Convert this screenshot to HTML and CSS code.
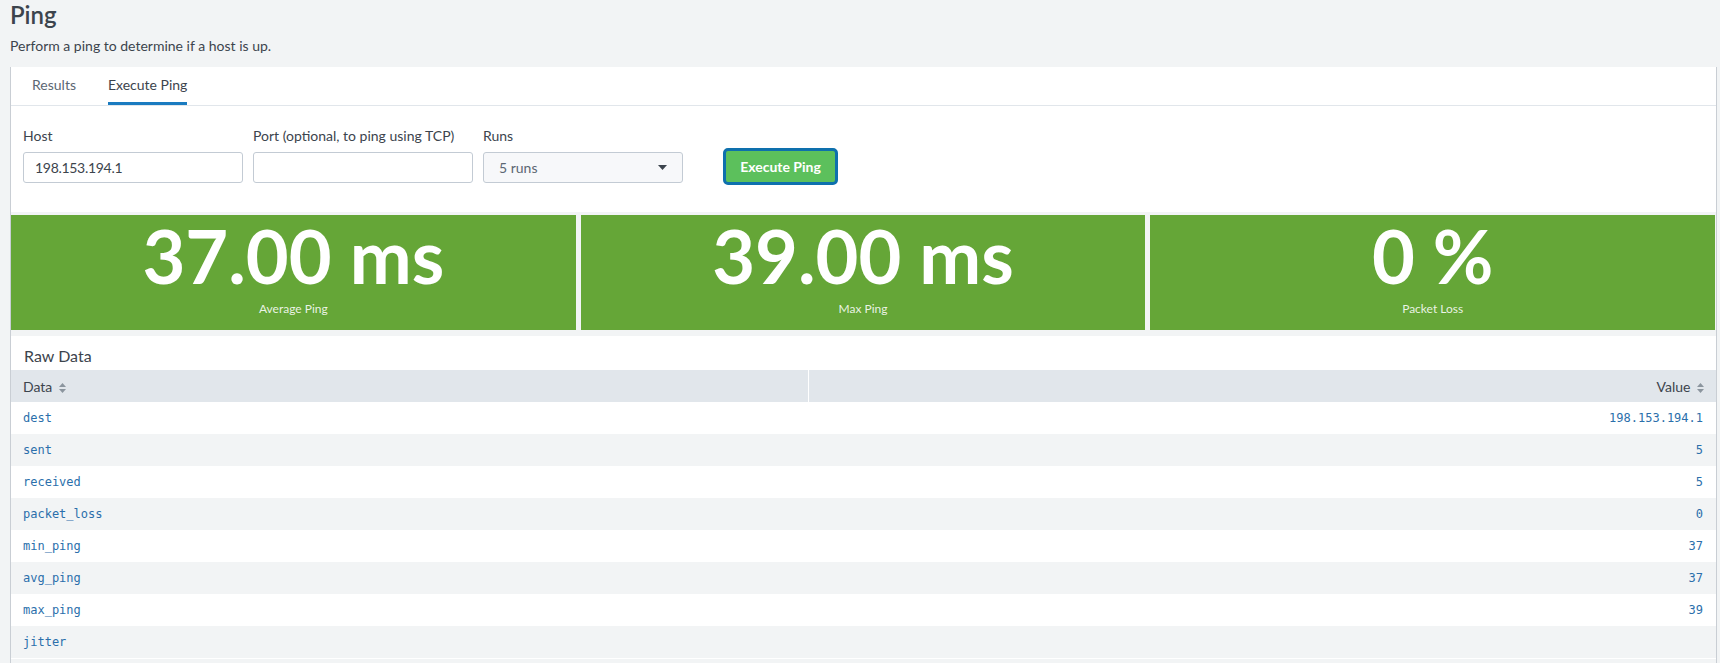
FILE: index.html
```html
<!DOCTYPE html>
<html lang="en">
<head>
<meta charset="utf-8">
<title>Ping</title>
<link rel="stylesheet" href="styles.css">
</head>
<body>
<header class="page-header">
  <h1 class="page-title">Ping</h1>
  <p class="page-desc">Perform a ping to determine if a host is up.</p>
</header>
<main class="panel">
  <nav class="tabs">
    <a class="tab">Results</a>
    <a class="tab tab-active">Execute Ping</a>
  </nav>
  <section class="form">
    <div class="field">
      <label class="field-label">Host</label>
      <div class="input input-text">198.153.194.1</div>
    </div>
    <div class="field">
      <label class="field-label">Port (optional, to ping using TCP)</label>
      <div class="input"></div>
    </div>
    <div class="field field-select">
      <label class="field-label">Runs</label>
      <div class="select">
        <span>5 runs</span>
        <svg class="caret" width="9" height="5" viewBox="0 0 9 5"><path d="M0 0h9L4.5 5z" fill="#3c444d"/></svg>
      </div>
    </div>
    <button class="btn-primary">Execute Ping</button>
  </section>
  <section class="stats">
    <div class="stat">
      <div class="stat-value">37.00 ms</div>
      <div class="stat-label">Average Ping</div>
    </div>
    <div class="stat">
      <div class="stat-value">39.00 ms</div>
      <div class="stat-label">Max Ping</div>
    </div>
    <div class="stat">
      <div class="stat-value">0 %</div>
      <div class="stat-label">Packet Loss</div>
    </div>
  </section>
  <section class="raw">
    <h2 class="raw-title">Raw Data</h2>
    <table class="table">
      <thead>
        <tr>
          <th class="col-data">Data <svg class="sort" width="7" height="10" viewBox="0 0 7 10"><path d="M3.5 0L7 4H0z M3.5 10L0 6h7z" fill="#8b959e"/></svg></th>
          <th class="col-value">Value <svg class="sort" width="7" height="10" viewBox="0 0 7 10"><path d="M3.5 0L7 4H0z M3.5 10L0 6h7z" fill="#8b959e"/></svg></th>
        </tr>
      </thead>
      <tbody>
        <tr><td class="col-data">dest</td><td class="col-value">198.153.194.1</td></tr>
        <tr><td class="col-data">sent</td><td class="col-value">5</td></tr>
        <tr><td class="col-data">received</td><td class="col-value">5</td></tr>
        <tr><td class="col-data">packet_loss</td><td class="col-value">0</td></tr>
        <tr><td class="col-data">min_ping</td><td class="col-value">37</td></tr>
        <tr><td class="col-data">avg_ping</td><td class="col-value">37</td></tr>
        <tr><td class="col-data">max_ping</td><td class="col-value">39</td></tr>
        <tr><td class="col-data">jitter</td><td class="col-value"></td></tr>
      </tbody>
    </table>
    <div class="table-foot"></div>
  </section>
</main>
</body>
</html>
```

FILE: styles.css
```css
html, body {
  margin: 0;
  padding: 0;
}
body {
  background: #f2f4f5;
  font-family: Lato, "Open Sans", sans-serif;
  color: #3c444d;
  font-size: 14px;
}
.page-header {
  padding: 0 10px;
}
.page-title {
  margin: 0;
  font-size: 24px;
  line-height: 30px;
  font-weight: 600;
}
.page-desc {
  margin: 6px 0 11px;
  font-size: 14px;
  line-height: 20px;
}
.panel {
  margin: 0 3px 0 10px;
  background: #fff;
  border-left: 1px solid #c9ced4;
  border-right: 1px solid #c9ced4;
}
.tabs {
  display: flex;
  gap: 32px;
  padding-left: 21px;
  border-bottom: 1px solid #e1e6eb;
}
.tab {
  display: block;
  padding-top: 8px;
  height: 27px;
  line-height: 20px;
  font-size: 14px;
  color: #5c6773;
  border-bottom: 3px solid transparent;
}
.tab-active {
  color: #3c444d;
  border-bottom-color: #1a7bc0;
}
.form {
  display: flex;
  align-items: flex-start;
  gap: 10px;
  padding: 20px 12px 27px;
}
.field {
  display: flex;
  flex-direction: column;
  width: 220px;
}
.field-select {
  width: 200px;
}
.field-label {
  line-height: 20px;
  font-size: 14px;
  margin-bottom: 6px;
}
.input {
  box-sizing: border-box;
  height: 31px;
  border: 1px solid #c3cbd4;
  border-radius: 3px;
  background: #fff;
}
.input-text {
  padding-left: 11px;
  line-height: 29px;
  font-size: 14px;
  letter-spacing: -0.3px;
}
.select {
  box-sizing: border-box;
  height: 31px;
  border: 1px solid #c3cbd4;
  border-radius: 3px;
  background: #f7f8fa;
  display: flex;
  align-items: center;
  justify-content: space-between;
  padding: 0 15px 0 15px;
  color: #5c6773;
}
.caret {
  display: block;
}
.btn-primary {
  margin: 22px 0 0 30px;
  box-sizing: border-box;
  width: 115px;
  height: 37px;
  background: #5cc05c;
  border: 3px solid #0e70ad;
  border-radius: 5px;
  color: #fff;
  font-family: Lato, "Open Sans", sans-serif;
  font-weight: 700;
  font-size: 14px;
  padding: 0;
}
.stats {
  display: flex;
  gap: 5px;
  background: #f2f4f5;
  padding: 3px 1px 6px 0;
}
.stat {
  flex: 1;
  height: 115px;
  background: #65a637;
  color: #fff;
  text-align: center;
  box-sizing: border-box;
  padding-top: 4px;
}
.stat-value {
  font-size: 74px;
  line-height: 74px;
  font-weight: 700;
}
.stat-label {
  margin-top: 8px;
  font-size: 12px;
  line-height: 16px;
  color: rgba(255, 255, 255, 0.88);
}
.raw-title {
  margin: 0;
  padding: 10px 0 4px 13px;
  font-size: 16px;
  line-height: 20px;
  font-weight: 400;
}
.table {
  width: 100%;
  border-collapse: collapse;
}
.table th {
  height: 32px;
  padding: 0 12px;
  background: #e1e6eb;
  font-weight: 400;
  font-size: 14px;
  text-align: left;
  color: #3c444d;
}
.table th.col-data {
  width: 773px;
  border-right: 1px solid #fff;
}
.table th.col-value {
  text-align: right;
  padding-right: 12px;
}
.sort {
  margin-left: 3px;
  vertical-align: -1px;
}
.table td {
  height: 32px;
  padding: 0 12px;
  font-family: "DejaVu Sans Mono", "Liberation Mono", monospace;
  font-size: 12px;
  color: #2b6fab;
}
.table td.col-value {
  text-align: right;
  padding-right: 13px;
}
.table tbody tr:nth-child(even) td {
  background: #f2f4f5;
}
.table-foot {
  margin-top: 1px;
  height: 8px;
  background: #f2f4f5;
}
```
